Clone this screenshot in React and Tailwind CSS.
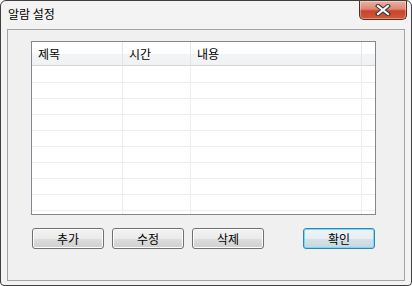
import React from "react";

const COLS = [
  { key: "title", label: "제목", width: "w-[91px]" },
  { key: "time", label: "시간", width: "w-[68px]" },
  { key: "body", label: "내용", width: "w-[171px]" },
];

const ROWS = Array.from({ length: 10 }, (_, i) => i);

function CloseButton() {
  return (
    <div className="w-[48px] h-[19px] rounded-b-[5px] border border-t-0 border-[#5b2a20] bg-[linear-gradient(#eab2a5_0%,#dc8672_45%,#c8452c_55%,#d4553a_100%)] flex items-center justify-center shadow-[inset_0_0_0_1px_rgba(255,255,255,0.35)]">
      <svg width="16" height="12" viewBox="0 0 16 12">
        <path d="M3 2 L13 10 M13 2 L3 10" stroke="#3b3b3b" strokeWidth="4.2" strokeLinecap="square" />
        <path d="M3 2 L13 10 M13 2 L3 10" stroke="#ffffff" strokeWidth="2" strokeLinecap="square" />
      </svg>
    </div>
  );
}

function Button({ label, primary }) {
  return (
    <button
      className={
        primary
          ? "w-[72px] h-[21px] rounded-[3px] border border-[#3c7fb1] bg-[linear-gradient(#eef5f8_0%,#e6eef2_50%,#d6e2e8_51%,#c8d6dd_100%)] shadow-[inset_0_0_0_1px_#6fdcf8] text-[12px] leading-none text-black flex items-center justify-center"
          : "w-[72px] h-[21px] rounded-[3px] border border-[#707070] bg-[linear-gradient(#f2f2f2_0%,#ebebeb_50%,#dddddd_51%,#cfcfcf_100%)] shadow-[inset_0_0_0_1px_#fcfcfc] text-[12px] leading-none text-black flex items-center justify-center"
      }
    >
      {label}
    </button>
  );
}

export default function App() {
  return (
    <div className="w-[412px] h-[286px] bg-white font-['Noto_Sans_CJK_KR',sans-serif]">
      <div className="w-[412px] h-[286px] flex flex-col rounded-t-[6px] rounded-b-[4px] border border-[#3f3f3f] bg-[#f3f3f3]">
        {/* 제목 표시줄 */}
        <div className="h-[28px] flex justify-between pl-[7px] pr-[4px]">
          <span className="pt-[5px] text-[12px] leading-[16px] text-black">알람 설정</span>
          <CloseButton />
        </div>

        {/* 클라이언트 영역 */}
        <div className="mx-[6px] mb-[4px] flex-1 border border-[#a3a3a3] bg-[#f0f0f0] pl-[23px] pt-[11px]">
          <div className="w-[345px] h-[174px] border border-[#828790] bg-white overflow-hidden flex flex-col">
            <div className="h-[24px] shrink-0 flex border-b border-[#d5d5d5] bg-[linear-gradient(#ffffff_0%,#ffffff_50%,#f3f4f6_51%,#f1f2f4_100%)]">
              {COLS.map((c) => (
                <div
                  key={c.key}
                  className={`${c.width} h-full border-r border-[#e3e4e6] pl-[6px] flex items-center text-[12px] text-black`}
                >
                  {c.label}
                </div>
              ))}
              <div className="flex-1" />
            </div>
            {ROWS.map((r) => (
              <div key={r} className={`h-[16px] shrink-0 flex border-b border-[#ededed] ${r === 0 ? "mt-px" : ""}`}>
                {COLS.map((c) => (
                  <div key={c.key} className={`${c.width} h-full border-r border-[#ededed]`} />
                ))}
                <div className="flex-1" />
              </div>
            ))}
          </div>

          <div className="mt-[13px] flex pl-px">
            <Button label="추가" />
            <div className="ml-[8px]">
              <Button label="수정" />
            </div>
            <div className="ml-[8px]">
              <Button label="삭제" />
            </div>
            <div className="ml-[39px]">
              <Button label="확인" primary />
            </div>
          </div>
        </div>
      </div>
    </div>
  );
}
